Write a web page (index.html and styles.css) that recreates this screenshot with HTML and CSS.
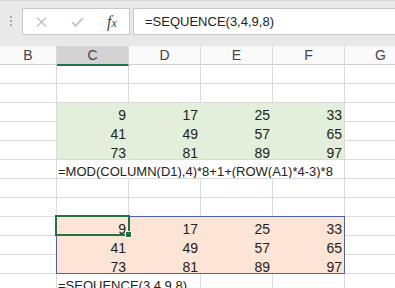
FILE: index.html
```html
<!DOCTYPE html>
<html lang="en">
<head>
  <meta charset="UTF-8" />
  <title>SEQUENCE</title>
  <link rel="stylesheet" href="styles.css">
</head>
<body>

<div id="topbar">
  <div class="grip"><span></span><span></span><span></span></div>
  <div class="fx-buttons">
    <svg class="btn-x" width="11" height="10" viewBox="0 0 11 10"><path d="M1 0.5 L10 9.5 M10 0.5 L1 9.5" stroke="#c0c0c0" stroke-width="1.3" fill="none"/></svg>
    <svg class="btn-ok" width="13" height="10" viewBox="0 0 13 10"><path d="M1 5 L4.5 8.8 L12 1" stroke="#c0c0c0" stroke-width="1.8" fill="none"/></svg>
    <span class="fx">f<i>x</i></span>
  </div>
  <div class="formula">=SEQUENCE(3,4,9,8)</div>
</div>

<div id="sheet">
  <div class="hd">B</div><div class="hd sel">C</div><div class="hd">D</div><div class="hd">E</div><div class="hd">F</div><div class="hd">G</div>

  <div class="c"></div><div class="c"></div><div class="c"></div><div class="c"></div><div class="c"></div><div class="c"></div>
  <div class="c"></div><div class="c"></div><div class="c"></div><div class="c"></div><div class="c"></div><div class="c"></div>

  <div class="c"></div><div class="c n green">9</div><div class="c n green">17</div><div class="c n green">25</div><div class="c n green edge">33</div><div class="c"></div>
  <div class="c"></div><div class="c n green">41</div><div class="c n green">49</div><div class="c n green">57</div><div class="c n green edge">65</div><div class="c"></div>
  <div class="c"></div><div class="c n green last">73</div><div class="c n green last">81</div><div class="c n green last">89</div><div class="c n green last edge">97</div><div class="c"></div>

  <div class="c"></div><div class="c t over">=MOD(COLUMN(D1),4)*8+1+(ROW(A1)*4-3)*8</div><div class="c over"></div><div class="c over"></div><div class="c"></div><div class="c"></div>

  <div class="c"></div><div class="c"></div><div class="c"></div><div class="c"></div><div class="c"></div><div class="c"></div>
  <div class="c"></div><div class="c"></div><div class="c"></div><div class="c"></div><div class="c"></div><div class="c"></div>

  <div class="c"></div><div class="c n peach">9</div><div class="c n peach">17</div><div class="c n peach">25</div><div class="c n peach">33</div><div class="c"></div>
  <div class="c"></div><div class="c n peach">41</div><div class="c n peach">49</div><div class="c n peach">57</div><div class="c n peach">65</div><div class="c"></div>
  <div class="c"></div><div class="c n peach">73</div><div class="c n peach">81</div><div class="c n peach">89</div><div class="c n peach">97</div><div class="c"></div>

  <div class="c"></div><div class="c t over">=SEQUENCE(3,4,9,8)</div><div class="c"></div><div class="c"></div><div class="c"></div><div class="c"></div>

  <div class="range"></div>
  <div class="cursor"><span class="handle"></span></div>
</div>

</body>
</html>
```

FILE: styles.css
```css
body {
  margin: 0;
  font-family: "Liberation Sans", Arial, sans-serif;
  background: #fff;
  color: #222;
  overflow: hidden;
}

#topbar {
  height: 46px;
  background: #e9e9e9;
  box-sizing: border-box;
  border-top: 1px solid #dadada;
  padding-top: 7px;
  display: flex;
  align-items: flex-start;
}

.grip {
  width: 22px;
  display: flex;
  flex-direction: column;
  align-items: center;
  gap: 2px;
  padding-top: 8px;
}

.grip span {
  width: 2px;
  height: 2px;
  background: #a8a8a8;
}

.fx-buttons {
  width: 106px;
  height: 25px;
  background: #fff;
  border: 1px solid #c8c8c8;
  display: flex;
  align-items: center;
  box-sizing: content-box;
}

.btn-x {
  margin-left: 13px;
}

.btn-ok {
  margin-left: 24px;
}

.fx {
  margin-left: 23px;
  font-family: "Liberation Serif", serif;
  font-style: italic;
  font-size: 16px;
  color: #444;
}

.fx i {
  font-size: 12px;
}

.formula {
  flex: 1;
  margin-left: 3px;
  height: 25px;
  background: #fff;
  border: 1px solid #c8c8c8;
  border-right: none;
  font-size: 13px;
  line-height: 25px;
  padding-left: 11px;
  color: #222;
}

#sheet {
  position: relative;
  display: grid;
  grid-template-columns: 57px 72px 72px 72px 72px 72px;
  grid-auto-rows: 19px;
  width: 395px;
  overflow: hidden;
}

.hd {
  box-sizing: border-box;
  background: #fafafa;
  border-right: 1px solid #dadada;
  border-bottom: 1px solid #d0d0d0;
  text-align: center;
  font-size: 14px;
  line-height: 19px;
  color: #444;
}

.hd.sel {
  background: #d3d3d3;
  border-bottom: 2px solid #217346;
  line-height: 18px;
  margin-bottom: -1px;
  height: 20px;
  position: relative;
  z-index: 1;
}

.c {
  box-sizing: border-box;
  border-right: 1px solid #dadada;
  border-bottom: 1px solid #dadada;
  font-size: 14px;
  line-height: 18px;
  padding-top: 3px;
  white-space: nowrap;
}

.n {
  text-align: right;
  padding-right: 2px;
}

.t {
  font-size: 13px;
  padding-left: 1px;
}

.over {
  border-right-color: transparent;
}

.green {
  background: #e2efda;
  border-color: #e2efda;
}

.green.last {
  border-bottom-color: #dadada;
}

.green.edge {
  border-right-color: #dadada;
}

.peach {
  background: #fce4d6;
  border-color: #fce4d6;
}

.range {
  position: absolute;
  left: 56px;
  top: 170px;
  width: 289px;
  height: 58px;
  box-sizing: border-box;
  border: 1px solid #5163a8;
}

.cursor {
  position: absolute;
  left: 55px;
  top: 169px;
  width: 75px;
  height: 21px;
  box-sizing: border-box;
  border: 2px solid #217346;
}

.handle {
  position: absolute;
  right: -4px;
  bottom: -4px;
  width: 5px;
  height: 5px;
  background: #217346;
  border: 1px solid #fff;
}
```
